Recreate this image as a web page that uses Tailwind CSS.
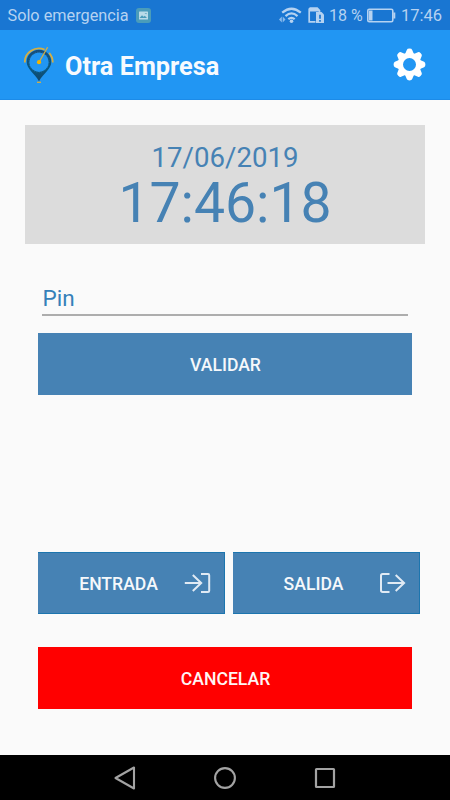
<!DOCTYPE html>
<html lang="es">
<head>
<meta charset="utf-8">
<title>Otra Empresa</title>
<script src="https://cdn.jsdelivr.net/npm/@tailwindcss/browser@4"></script>
</head>
<body class="bg-[#fafafa]">
<div class="flex h-[800px] w-[450px] flex-col overflow-hidden bg-[#fafafa] font-[Roboto,sans-serif]">
  <div class="flex h-[30px] shrink-0 items-center bg-[#1976d2] pl-[7.500px] pr-2 text-[16.250px] leading-[30px] text-[#b5d2f1]">
    <span class="w-[121px] whitespace-nowrap pt-px">Solo emergencia</span>
    <svg class="ml-[7px]" width="15" height="15" viewBox="0 0 15 15">
      <rect width="15" height="15" rx="3" fill="#4a9cba"/>
      <rect x="3" y="3.5" width="9" height="8" rx=".6" fill="#b9dbe8"/>
      <path d="M3.500 10 6 7.200l1.600 1.600 1.200-1 2.200 2.200zM8.500 5h2v1.200z" fill="#4a9cba"/>
    </svg>
    <svg class="ml-auto" width="24" height="20" viewBox="0 0 24 20" fill="none">
      <path d="M3.200 7.700Q12.500-.2 21.800 7.700M6.500 11.100Q12.500 5.700 18.500 11.100M9.300 14.200Q12.500 11.500 15.700 14.200" stroke="#b5d2f1" stroke-width="2.200"/>
      <circle cx="12.500" cy="16.300" r="1.800" fill="#b5d2f1"/>
      <path d="m0 14.500 2.800-3v6zM6.500 14.500l-2.800-3v6z" fill="#8abaec"/>
    </svg>
    <svg class="ml-[5px]" width="17" height="17" viewBox="0 0 17 17" fill="none">
      <path d="M7.500 14.800H1.200V2.200L2.200 1.200h7l2.300 2.300v2" stroke="#b5d2f1" stroke-width="1.700"/>
      <path d="M1 1h8.500l2 2v1.500H1z" fill="#b5d2f1"/>
      <path d="M8 5h5.500L16 7.500V16H8z" fill="#b5d2f1"/>
      <path d="M12 7.800v4M12 13v1.700" stroke="#1976d2" stroke-width="1.700"/>
    </svg>
    <span class="ml-[4px] w-[35px] whitespace-nowrap pt-px text-[16px]">18 %</span>
    <svg class="ml-[3px]" width="29" height="15" viewBox="0 0 29 15" fill="none">
      <rect x=".8" y="1.300" width="25" height="12.400" rx="1.500" stroke="#b5d2f1" stroke-width="1.600"/>
      <path d="M2 2.500h3.500v10H2z" fill="#b5d2f1"/><path d="M27.300 4.500v6" stroke="#b5d2f1" stroke-width="2"/>
    </svg>
    <span class="ml-[5px] w-[41px] whitespace-nowrap pt-px text-[16.500px]">17:46</span>
  </div>

  <header class="flex h-[70px] shrink-0 items-center border-b border-[#1c8be8] bg-[#2196f3] pl-[23px] pr-6">
    <svg width="32" height="38" viewBox="0 0 32 38" fill="none">
      <defs><linearGradient id="pin" x1="0" y1="0" x2="0" y2="1"><stop offset="0" stop-color="#164d7c"/><stop offset=".6" stop-color="#075984"/><stop offset="1" stop-color="#124568"/></linearGradient></defs>
      <path fill-rule="evenodd" d="M16 3.800C9.200 3.800 3.700 9 3.700 15.800c0 7.400 7.600 11.400 12.300 19.400 4.700-8 12.300-12 12.300-19.400C28.300 9 22.800 3.800 16 3.800zm0 2.700a9.700 9.700 0 1 1 0 19.400 9.700 9.700 0 0 1 0-19.400z" fill="url(#pin)"/>
      <circle cx="16" cy="16.200" r="10" stroke="#3c85b0" stroke-width=".7" stroke-dasharray=".7 1.800"/>
      <path d="M1.900 16.500A14.100 13.300 0 0 1 21.600 3.600M26.100 6.800a13.500 13.500 0 0 1 3.600 9.700" stroke="#d5af43" stroke-width="1.800"/>
      <path d="M16 16.200 24.600 1.300" stroke="#d5af43" stroke-width="1.300"/>
      <circle cx="16" cy="16.200" r="2.100" fill="#f4b400"/>
      <path d="M14 36.300h4" stroke="#d5af43" stroke-width="1.300"/>
    </svg>
    <h1 class="ml-[10px] whitespace-nowrap pt-[5px] text-[25.300px] font-bold leading-[30px] text-[#f7fafe]">Otra Empresa</h1>
    <svg class="ml-auto" width="33" height="33" viewBox="-16.500 -16.500 33 33">
      <g fill="#fff">
        <path fill-rule="evenodd" d="M0-11.700a11.700 11.700 0 1 1 0 23.400 11.700 11.700 0 0 1 0-23.400zM0-6.500a6.500 6.500 0 1 0 0 13A6.500 6.500 0 0 0 0-6.500z"/>
        <g id="teeth"><path id="tooth" d="M-4.400-10.500-2.700-14.600Q-2.300-15.900 0-15.900T2.700-14.600L4.400-10.500z"/><use href="#tooth" transform="rotate(45)"/><use href="#tooth" transform="rotate(90)"/><use href="#tooth" transform="rotate(135)"/></g>
        <use href="#teeth" transform="rotate(180)"/>
      </g>
    </svg>
  </header>

  <main class="flex grow flex-col pt-[25px] text-[#4682b4]">
    <section class="mx-[25px] flex h-[119px] flex-col items-center bg-[#dcdcdc] pt-4">
      <div class="text-[27.600px] leading-[33px]">17/06/2019</div>
      <div class="text-[55.300px] leading-[59px]">17:46:18</div>
    </section>
    <div class="mx-[42px] mt-[38px] h-[34px] border-b-2 border-[#adadad] pl-[.5px] text-[22.500px] leading-[32px] text-[#3580b9]">Pin</div>
    <button class="ml-[38px] mt-[17px] h-[62px] w-[374px] bg-[#4682b4] pl-px pt-[2px] text-[17.600px] font-medium text-[#f5f8fb]">VALIDAR</button>
    <div class="ml-[38px] mt-[157px] flex gap-2">
      <button class="flex h-[62px] w-[187px] items-center border-y border-r border-[#1c75ae] bg-[#4682b4] pr-[13px] text-[17.600px] font-medium text-[#f5f8fb]">
        <span class="grow pl-[15px] pt-[2px]">ENTRADA</span>
        <svg width="27" height="22" viewBox="0 0 27 22" fill="none" stroke="#e0eaf4" stroke-width="2"><path d="M.8 11h16.500M8.800 3l8.400 8-8.400 8M17 2h7q1.200 0 1.200 1.200v15.600q0 1.200-1.200 1.200h-7"/></svg>
      </button>
      <button class="flex h-[62px] w-[187px] items-center border-y border-r border-[#1c75ae] bg-[#4682b4] pr-[13px] text-[17.600px] font-medium text-[#f5f8fb]">
        <span class="grow pl-[15px] pt-[2px]">SALIDA</span>
        <svg width="27" height="22" viewBox="0 0 27 22" fill="none" stroke="#e0eaf4" stroke-width="2"><path d="M10.500 2H3.700Q2 2 2 3.700v14.600Q2 20 3.700 20h6.800M8.500 11h16.500M16.700 3l8.400 8-8.400 8"/></svg>
      </button>
    </div>
    <button class="ml-[38px] mt-[33px] h-[62px] w-[374px] bg-[#ff0000] pl-px pt-[2px] text-[17.600px] font-medium text-[#fff5f5]">CANCELAR</button>
  </main>

  <nav class="flex h-[45px] shrink-0 items-center justify-center gap-[76px] bg-black">
    <svg width="24" height="24" viewBox="0 0 24 24" fill="none" stroke="#a3a3a3" stroke-width="2.100" stroke-linejoin="round"><path d="M21 1.500v21L2.500 12z"/></svg>
    <svg width="24" height="24" viewBox="0 0 24 24" fill="none" stroke="#a3a3a3" stroke-width="2.100"><circle cx="12" cy="12" r="9.900"/></svg>
    <svg width="24" height="24" viewBox="0 0 24 24" fill="none" stroke="#a3a3a3" stroke-width="2.200"><rect x="3" y="3" width="18" height="18" rx=".5"/></svg>
  </nav>
</div>
</body>
</html>
